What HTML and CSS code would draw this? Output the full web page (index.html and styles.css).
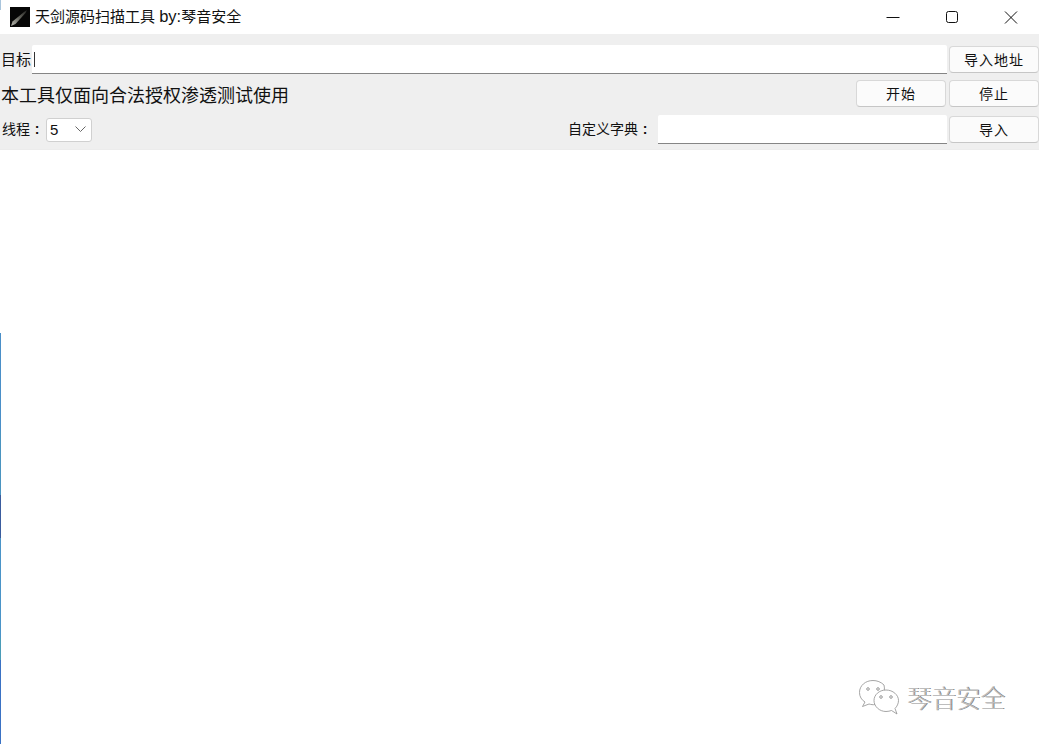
FILE: index.html
```html
<!DOCTYPE html>
<html lang="zh-CN">
<head>
<meta charset="utf-8">
<title>天剑源码扫描工具 by:琴音安全</title>
<link rel="stylesheet" href="styles.css">
</head>
<body>
<div class="window">
  <header class="titlebar">
    <svg class="app-icon" width="20" height="20" viewBox="0 0 20 20">
      <defs>
        <linearGradient id="blade" x1="0" y1="1" x2="1" y2="0">
          <stop offset="0" stop-color="#b8b8b0"/>
          <stop offset="0.5" stop-color="#66665f"/>
          <stop offset="1" stop-color="#222220"/>
        </linearGradient>
      </defs>
      <rect width="20" height="20" fill="#060606"/>
      <path d="M1 19 L2.500 14.500 L14 5 L17 3 L15.500 6 L5.500 17 Z" fill="url(#blade)"/>
    </svg>
    <span class="title">天剑源码扫描工具 <span class="latin">by:</span>琴音安全</span>
    <div class="controls">
      <svg class="ctl" width="60" height="30" viewBox="0 0 60 30"><path d="M23.500 15.500H36.500" stroke="#111" fill="none"/></svg>
      <svg class="ctl" width="58" height="30" viewBox="0 0 58 30"><rect x="23.500" y="9.500" width="11" height="11" rx="2" stroke="#111" fill="none"/></svg>
      <svg class="ctl" width="58" height="30" viewBox="0 0 58 30"><path d="M24 9.500L36 21.500M36 9.500L24 21.500" stroke="#111" fill="none"/></svg>
    </div>
  </header>
  <section class="panel">
    <div class="row row-target">
      <label class="label label-target">目标</label>
      <div class="field field-main"><span class="caret"></span></div>
      <button class="btn">导入地址</button>
    </div>
    <div class="row row-notice">
      <p class="notice">本工具仅面向合法授权渗透测试使用</p>
      <button class="btn">开始</button>
      <button class="btn">停止</button>
    </div>
    <div class="row row-dict">
      <label class="label">线程<span class="colon">:</span></label>
      <div class="select"><span>5</span>
        <svg width="11" height="7" viewBox="0 0 11 7"><path d="M0.500 0.500L5.500 5.500L10.500 0.500" stroke="#666" fill="none"/></svg>
      </div>
      <label class="label label-dict">自定义字典<span class="colon">:</span></label>
      <div class="field field-dict"></div>
      <button class="btn">导入</button>
    </div>
  </section>
  <main class="output"></main>
  <div class="edge edge-top"></div>
  <div class="edge edge-low"></div>
  <div class="watermark">
    <svg width="40" height="36" viewBox="0 0 40 36">
      <g fill="#fff" stroke="#8f8f8f" stroke-width="0.800">
        <path d="M14 .5C6.500 .5 .5 5.500 .5 12.500C.5 16.500 2.500 20 6 22L3.500 26.500L10 24C12 24.500 14 25 16 24.500C22 19 27 13 25 5C22 2 18 .5 14 .5Z"/>
        <path d="M27 10C20 10 15 15 15 20.500C15 26.500 20.500 31.500 27 31.500C29 31.500 31 31 32.500 30.500L38 34L36 28.500C38 26.500 39.500 23.500 39.500 20.500C39.500 15 34 10 27 10Z"/>
      </g>
      <g fill="none" stroke="#808080" stroke-width="0.800">
        <circle cx="9" cy="9" r="1.300"/><circle cx="19" cy="9" r="1.300"/>
        <circle cx="22" cy="17" r="1.300"/><circle cx="32" cy="17" r="1.300"/>
      </g>
    </svg>
    <span class="wm-text">琴音安全</span>
  </div>
</div>
</body>
</html>
```
FILE: styles.css
```css
* { box-sizing: border-box; }
html, body { margin: 0; height: 100%; background: #fff; overflow: hidden; }
body { font-family: "Liberation Sans", "Noto Sans CJK SC", sans-serif; color: #111; }

.window { position: relative; display: flex; flex-direction: column; width: 1039px; height: 744px; background: #fff; }

.titlebar { display: flex; align-items: center; height: 34px; padding: 0 0 2px 10px; background: #fff; }
.app-icon { flex: none; margin-right: 5px; margin-top: 2px; }
.title { font-size: 15px; line-height: 20px; color: #111; margin-top: 1px; }
.latin { font-size: 16.500px; }
.controls { display: flex; margin-left: auto; margin-top: 1px; }
.ctl { display: block; }

.panel { display: flex; flex-direction: column; height: 116px; padding-top: 11px; background: #efefef; border-bottom: 1px solid #ececec; }
.row { display: flex; align-items: center; }
.row-target { height: 29px; }
.row-notice { height: 27px; margin-top: 6px; }
.row-dict { height: 29px; margin-top: 8px; }

.label { flex: none; font-size: 14px; line-height: 20px; padding-left: 2px; color: #111; }
.row-dict .label { padding-bottom: 2px; }
.label-target { width: 32px; padding-left: 1px; font-size: 15px; white-space: nowrap; }
.label-dict { margin-left: auto; padding-right: 6px; }
.colon { display: inline-block; width: 14px; font-weight: 700; text-align: center; }

.field { align-self: stretch; background: #fff; border-bottom: 1px solid #858585; border-radius: 2px 2px 0 0; display: flex; align-items: center; }
.field-main { flex: 1; }
.field-dict { flex: none; width: 289px; }
.caret { width: 1px; height: 15px; margin-left: 2px; background: #333; }

.btn { flex: none; width: 90px; height: 27px; margin-left: 2px; padding: 0 0 2px; font: inherit; font-size: 14px; letter-spacing: 1px; color: #111; background: #fbfbfb; border: 1px solid #d8d8d8; border-bottom-color: #c6c6c6; border-radius: 4px; }
.row-notice .btn { margin-left: 3px; }

.notice { flex: 1; margin: 0; padding: 5px 0 0 1px; font-size: 18px; line-height: 22px; color: #111; }

.select { display: flex; flex: none; align-items: center; justify-content: space-between; width: 46px; height: 24px; margin-left: 2px; padding: 0 5px 0 3px; font-size: 15px; background: #fff; border: 1px solid #d0d0d0; border-radius: 3px; }

.output { flex: 1; background: #fff; }

.edge { position: absolute; left: 0; width: 1px; }
.edge-top { top: 0; height: 10px; background: #a8c4dc; }
.edge-low { top: 333px; bottom: 0; background: linear-gradient(to bottom, #4a8fc8 0, #4a8fc8 98px, #4a94c0 98px, #4a94c0 162px, #3a5c9e 162px, #3a5c9e 205px, #4a94c8 205px, #4a94c8 305px, #4a9cb8 305px, #4a9cb8 327px, #3a72c4 327px, #3a72c4 100%); }

.watermark { position: absolute; left: 859px; top: 680px; display: flex; align-items: flex-start; }
.wm-text { margin: 0 0 0 8px; font-family: "Noto Sans CJK SC", sans-serif; font-size: 24.500px; font-weight: 300; line-height: 36px; color: #bdbdbd; text-shadow: 1px 0 0 #808080; white-space: nowrap; }
```
